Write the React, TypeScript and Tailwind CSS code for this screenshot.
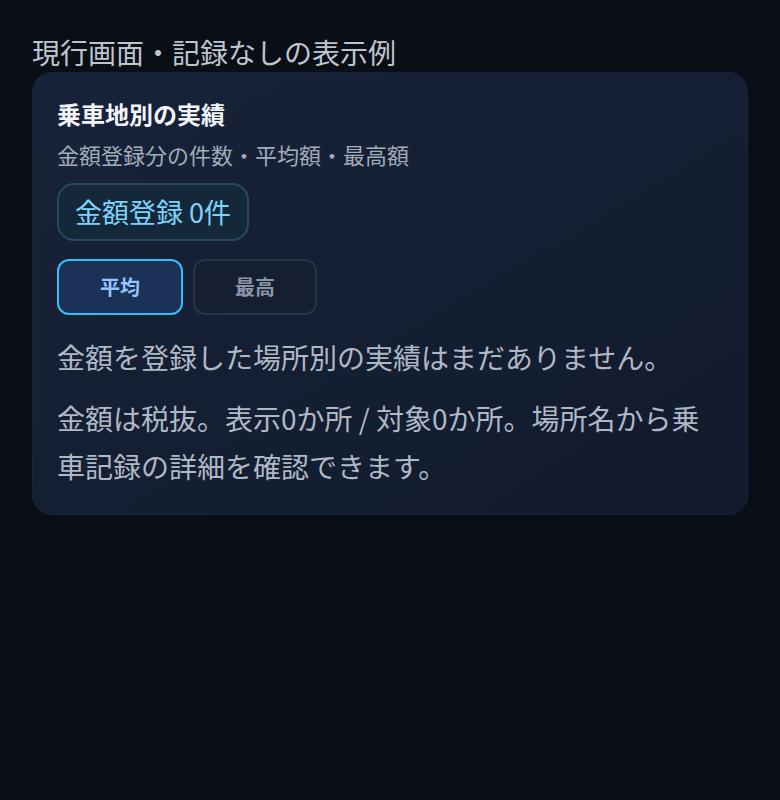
import { useState } from "react";

const App = () => {
  const [mode, setMode] = useState<"avg" | "max">("avg");

  return (
    <div
      className="min-h-[800px] bg-[#0a0e16] px-8 pt-[34px] pb-10"
      style={{ fontFamily: '"Noto Sans CJK JP", "Noto Sans", sans-serif' }}
    >
      <h2 className="text-[28px] leading-[36px] text-[#bfc5cf] mb-[2px]">
        現行画面・記録なしの表示例
      </h2>

      <section className="rounded-[20px] bg-gradient-to-br from-[#17233a] to-[#121b2c] border border-[#1a2538] px-6 pt-[25px] pb-[24px]">
        <h3 className="text-[24px] leading-[32px] font-bold text-[#f1f5f9]">
          乗車地別の実績
        </h3>
        <p className="mt-[9px] text-[22px] leading-[30px] text-[#a3acb9]">
          金額登録分の件数・平均額・最高額
        </p>

        <div className="mt-[14px] inline-flex h-[58px] items-center rounded-[17px] border-2 border-[#284860] bg-[#15283a] px-[16px] text-[27px] text-[#7dd3fc]">
          金額登録 0件
        </div>

        <div className="mt-[18px] flex gap-[10px]">
          <button
            onClick={() => setMode("avg")}
            className={
              mode === "avg"
                ? "h-14 w-[126px] rounded-[12px] border-2 border-[#38bdf8] bg-[#1b3156] text-[20px] font-bold text-[#93c5fd]"
                : "h-14 w-[126px] rounded-[12px] border-2 border-[#2a3446] bg-[#161f2f] text-[20px] font-bold text-[#8b95a7]"
            }
          >
            平均
          </button>
          <button
            onClick={() => setMode("max")}
            className={
              mode === "max"
                ? "h-14 w-[124px] rounded-[12px] border-2 border-[#38bdf8] bg-[#1b3156] text-[20px] font-bold text-[#93c5fd]"
                : "h-14 w-[124px] rounded-[12px] border-2 border-[#2a3446] bg-[#161f2f] text-[20px] font-bold text-[#8b95a7]"
            }
          >
            最高
          </button>
        </div>

        <p className="mt-[18px] text-[28px] leading-[48px] text-[#b0b8c6]">
          金額を登録した場所別の実績はまだありません。
        </p>
        <p className="mt-[13px] text-[28px] leading-[48px] text-[#b0b8c6]">
          金額は税抜。表示0か所 / 対象0か所。場所名から乗車記録の詳細を確認できます。
        </p>
      </section>
    </div>
  );
};

export default App;
